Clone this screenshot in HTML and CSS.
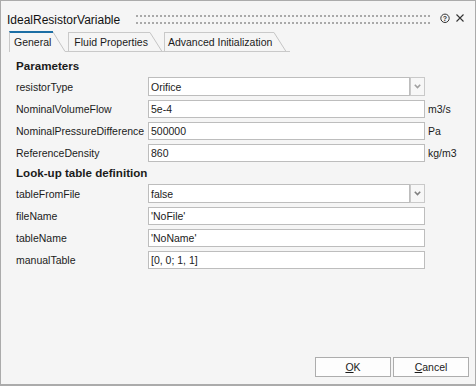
FILE: index.html
```html
<!DOCTYPE html>
<html>
<head>
<meta charset="utf-8">
<link rel="stylesheet" href="styles.css">
</head>
<body>
<div class="window">
  <div class="titlebar">
    <span class="title">IdealResistorVariable</span>
    <span class="grip"></span>
    <svg class="help" viewBox="0 0 10 10" width="10" height="10"><circle cx="5" cy="5.3" r="4.2" fill="none" stroke="#333" stroke-width="1"/><text x="5" y="7.9" text-anchor="middle" font-family="Liberation Sans, Arial, sans-serif" font-size="7" font-weight="bold" fill="#333">?</text></svg>
    <svg class="close" viewBox="0 0 8 8" width="8" height="8"><path d="M0.5 0.5 L7.5 7.5 M7.5 0.5 L0.5 7.5" stroke="#333" stroke-width="1.1" fill="none"/></svg>
  </div>
  <div class="tabs">
    <div class="tab active">
      <span class="tab-body">General</span>
      <svg class="slant" viewBox="0 0 12 21" width="12" height="21"><polygon points="0,0 12,20 12,21 0,21" fill="#f5f5f5"/><line x1="0" y1="1" x2="12" y2="20.5" stroke="#c4c4c4" stroke-width="1"/></svg>
    </div>
    <div class="tab">
      <span class="tab-body">Fluid Properties</span>
      <svg class="slant" viewBox="0 0 12 19" width="12" height="19"><line x1="0" y1="0.5" x2="12" y2="19.5" stroke="#c4c4c4" stroke-width="1"/></svg>
    </div>
    <div class="tab tab-last">
      <span class="tab-body">Advanced Initialization</span>
      <svg class="slant" viewBox="0 0 12 19" width="12" height="19"><line x1="0" y1="0.5" x2="12" y2="19.5" stroke="#c4c4c4" stroke-width="1"/></svg>
    </div>
  </div>
  <div class="content">
    <div class="section-title">Parameters</div>
    <div class="row sel">
      <span class="label">resistorType</span>
      <div class="select"><span class="select-value">Orifice</span><span class="select-btn"><svg viewBox="0 0 7 5" width="7" height="5"><path d="M0.8 0.8 L3.5 3.6 L6.2 0.8" stroke="#a0a0a0" stroke-width="1.6" fill="none"/></svg></span></div>
    </div>
    <div class="row">
      <span class="label">NominalVolumeFlow</span>
      <span class="input">5e-4</span>
      <span class="unit">m3/s</span>
    </div>
    <div class="row">
      <span class="label">NominalPressureDifference</span>
      <span class="input">500000</span>
      <span class="unit">Pa</span>
    </div>
    <div class="row">
      <span class="label">ReferenceDensity</span>
      <span class="input">860</span>
      <span class="unit">kg/m3</span>
    </div>
    <div class="section-title second">Look-up table definition</div>
    <div class="row sel">
      <span class="label">tableFromFile</span>
      <div class="select"><span class="select-value">false</span><span class="select-btn"><svg viewBox="0 0 7 5" width="7" height="5"><path d="M0.8 0.8 L3.5 3.6 L6.2 0.8" stroke="#808080" stroke-width="1.6" fill="none"/></svg></span></div>
    </div>
    <div class="row">
      <span class="label">fileName</span>
      <span class="input">'NoFile'</span>
    </div>
    <div class="row">
      <span class="label">tableName</span>
      <span class="input">'NoName'</span>
    </div>
    <div class="row">
      <span class="label">manualTable</span>
      <span class="input">[0, 0; 1, 1]</span>
    </div>
  </div>
  <div class="footer">
    <button class="btn"><u>O</u>K</button>
    <button class="btn"><u>C</u>ancel</button>
  </div>
</div>
</body>
</html>
```
FILE: styles.css
```css
* { box-sizing: border-box; }
html, body { margin: 0; padding: 0; background: #ffffff; }
body {
  font-family: "Liberation Sans", Arial, sans-serif;
  font-size: 10.5px;
  color: #1b1b1b;
}
.window {
  width: 476px;
  height: 386px;
  border: 1px solid #ababab;
  border-bottom-width: 2px;
  background: #f5f5f5;
  display: flex;
  flex-direction: column;
}
.titlebar {
  display: flex;
  align-items: flex-start;
  height: 30px;
  padding: 12px 11px 0 6px;
  flex: none;
}
.title {
  font-size: 12px;
  line-height: 14px;
  color: #111111;
  white-space: nowrap;
}
.grip {
  flex: 1;
  height: 9px;
  margin: 2px 10px 0 16px;
  background:
    linear-gradient(to right, #a9a9a9 2px, transparent 2px) 0 0 / 4px 2px repeat-x,
    linear-gradient(to right, #a9a9a9 2px, transparent 2px) 0 7px / 4px 2px repeat-x;
}
.help { display: block; flex: none; }
.close { display: block; flex: none; margin: 1px 0 0 6px; }

.tabs {
  display: flex;
  align-items: flex-end;
  align-self: flex-start;
  flex: none;
  height: 21px;
  margin-left: 8px;
  padding-right: 4px;
  border-bottom: 1px solid #c9c9c9;
}
.tab {
  display: flex;
  align-items: flex-end;
  margin-left: 3px;
}
.tab.active {
  margin-left: 0;
  margin-bottom: -1px;
  position: relative;
  z-index: 1;
}
.tab.tab-last { margin-left: 2px; }
.tab-body {
  display: block;
  height: 19px;
  line-height: 12px;
  padding: 3px 2px 3px 5px;
  border-top: 1px solid #c9c9c9;
  border-left: 1px solid #c9c9c9;
  white-space: nowrap;
}
.tab.tab-last .tab-body { padding-left: 3px; }
.tab.active .tab-body {
  height: 21px;
  padding: 3px 2px 4px 4px;
  border-top: 2px solid #1c6ea4;
  background: #f5f5f5;
}
.slant { display: block; flex: none; }

.content {
  flex: 1;
  padding: 7px 0 0 15px;
}
.section-title {
  font-weight: bold;
  font-size: 11.6px;
  line-height: 14px;
  margin-bottom: 4px;
  color: #1b1b1b;
}
.section-title.second { margin-top: 4px; }
.row {
  display: flex;
  align-items: center;
  height: 18px;
  margin-bottom: 4px;
}
.row.sel { height: 19px; }
.label {
  width: 132px;
  flex: none;
  white-space: nowrap;
}
.input {
  width: 277px;
  height: 100%;
  flex: none;
  display: flex;
  align-items: center;
  padding-left: 2px;
  background: #ffffff;
  border: 1px solid #bdbdbd;
  white-space: nowrap;
}
.unit { margin-left: 3px; white-space: nowrap; }
.select {
  width: 277px;
  height: 100%;
  flex: none;
  display: flex;
}
.select-value {
  flex: 1;
  display: flex;
  align-items: center;
  padding-left: 2px;
  background: #ffffff;
  border: 1px solid #bdbdbd;
}
.select-btn {
  width: 15px;
  flex: none;
  display: flex;
  align-items: center;
  justify-content: center;
  border: 1px solid #c9c9c9;
  background: #f7f7f7;
}
.select-btn svg { display: block; }

.footer {
  flex: none;
  display: flex;
  justify-content: flex-end;
  gap: 2px;
  padding: 0 6px 7px 0;
}
.btn {
  width: 76px;
  height: 20px;
  padding: 0;
  margin: 0;
  font-family: "Liberation Sans", Arial, sans-serif;
  font-size: 10.5px;
  color: #1b1b1b;
  background: #fdfdfd;
  border: 1px solid #adadad;
  border-radius: 0;
}
.btn u { text-decoration: underline; }
```
